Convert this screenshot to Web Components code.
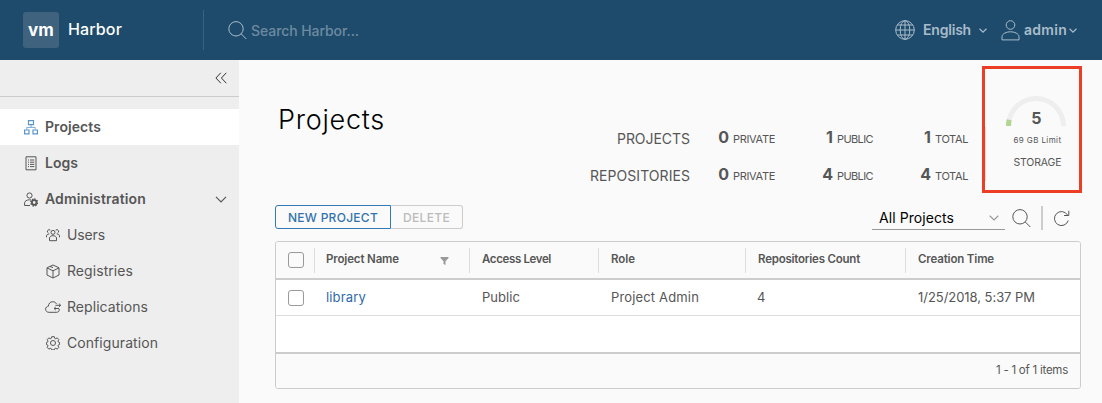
<!DOCTYPE html>
<html lang="en">
<head>
<meta charset="utf-8">
<title>Harbor</title>
<style>
html,body{margin:0;padding:0}
body{font-family:Inter,"Open Sans","Liberation Sans",sans-serif;font-size:14px;line-height:20px;color:#565656;background:#fafafa}
</style>
</head>
<body>
<hb-app></hb-app>
<script>
const define = (name, html, setup) => {
  const tpl = document.createElement('template');
  tpl.innerHTML = html;
  customElements.define(name, class extends HTMLElement {
    constructor() {
      super();
      this.attachShadow({ mode: 'open' }).append(document.importNode(tpl.content, true));
    }
    connectedCallback() { if (setup) setup(this, this.shadowRoot); }
  });
};

const icons = {
  search: ['0 0 19 19', '<circle cx="8" cy="7.8" r="7.2"/><path d="M13.3 13l5 5"/>'],
  globe: ['0 0 20 20', '<circle cx="10" cy="10" r="9.3"/><ellipse cx="10" cy="10" rx="4.8" ry="9.3"/><path d="M10 .7v18.6M.7 10h18.6M2.4 5h15.2M2.4 15h15.2"/>'],
  user: ['0 0 19 21', '<circle cx="9.5" cy="5" r="4.3"/><path d="M1 19.9v-3.2c0-3 4.5-4.9 8.500-4.900s8.500 1.900 8.500 4.900v3.200z"/>'],
  down: ['0 0 10 6', '<path vector-effect="non-scaling-stroke" stroke-width="1.200" d="M.7.8L5 5 9.300.8"/>'],
  collapse: ['0 0 12 12', '<path d="M5.800.8L.9 6l4.900 5.200M11.300.8L6.400 6l4.900 5.200"/>'],
  tree: ['0 0 14 15', '<path stroke-width="1.200" d="M4.500.6h5v4h-5zM.6 10h4.400v3.900H.6zM9 10h4.400v3.900H9z"/><path stroke-width=".8" d="M7 4.800v2.600M2.800 9.500V7.400h8.400v2.100"/>'],
  log: ['0 0 12 15', '<path d="M1 .8h10v13H1z"/><path d="M3 4h1M5 4h4.300M3 6.200h1M5 6.200h4.300M3 8.400h1M5 8.400h4.300M3 10.600h1M5 10.600h4.300"/>'],
  admin: ['0 0 14 15', '<circle cx="5.500" cy="3.500" r="2.600"/><path d="M6 13.500H.6v-2.700c0-1.700 2.400-3 4.900-3l1.700.2"/><circle cx="10.200" cy="10.500" r="2.300" stroke-width="1.800"/><path stroke-width="1.500" stroke-dasharray="1.400 1.270" d="M10.200 7.100a3.400 3.400 0 110 6.800 3.400 3.400 0 010-6.800"/>'],
  users: ['0 0 14 14', '<circle cx="7" cy="4.400" r="2"/><path d="M3.500 12.700V10c0-1.300 1.600-2.300 3.500-2.300s3.500 1 3.500 2.300v2.700zM4.300 2.200A1.700 1.700 0 102.500 5M9.700 2.200A1.700 1.700 0 1111.500 5M.5 9.300V8c0-1.200 1.100-2 2.800-2M13.500 9.300V8c0-1.200-1.100-2-2.800-2"/>'],
  box: ['0 0 14 15', '<path d="M7 1l6 2.800v7.200L7 14l-6-3V3.800zM1 3.900l6 2.900 6-2.900M7 6.800V14M4 2.400l3 1.300"/>'],
  cloud: ['0 0 17 12', '<path d="M14.300 8c.3 1.900-.8 3.300-2.600 3.300H3.900C2 11.300.6 10 .6 8.200c0-1.700 1.200-2.900 2.800-3C3.500 2.600 5.200.7 7.700.7c1.700 0 3 .8 3.800 2.200M10.500 4.300h5M13.900 2.600l1.800 1.700-1.800 1.700M14 7.500H9.300M10.800 5.900L9.100 7.500l1.700 1.700"/>'],
  gear: ['0 0 14 14', '<circle cx="7" cy="7" r="2.500"/><path d="M5.700.7h2.600l.4 1.600 1 .4 1.500-.8 1.600 1.700-.8 1.500.4 1 1.200.4v2l-1.200.4-.4 1 .8 1.500-1.600 1.700-1.500-.8-1 .4-.4 1.200H5.700l-.4-1.200-1-.4-1.500.8-1.600-1.700.8-1.500-.4-1L.4 8.500v-2l1.200-.4.4-1-.8-1.500 1.600-1.700 1.500.8 1-.4z"/>'],
  filter: ['0 0 8 8', '<path fill="currentColor" stroke="none" d="M0 0h8v1L5 4.200V8L3 7V4.200L0 1z"/>'],
  refresh: ['0 0 16 17', '<path d="M14.200 10.500A7 7 0 1113.500 5M14.800.8v4.700H10"/>'],
};

/* dashboard page */
define('hb-app', `<style>
  :host{display:grid;grid-template:60px 343px/239px 1fr;width:1102px;height:403px;overflow:hidden}
  hb-header{grid-column:1/3}
</style>
<hb-header></hb-header><hb-sidebar></hb-sidebar><hb-main></hb-main>`);

define('hb-header', `<style>
  :host{display:flex;align-items:center;background:#1e4b6b;color:#a9bccb;box-sizing:border-box;padding-left:23px}
  .logo{width:36px;height:36px;border-radius:3px;background:#3f627f;color:#fff;display:flex;align-items:center;justify-content:center;font:700 17px/30px Inter,sans-serif}
  .name{color:#fff;font-size:16px;font-weight:500;margin-left:9px;width:135px;margin-top:-2px}
  .sep{width:1px;height:40px;background:#3b617d}
  .q{margin:0 4px 0 24px}
  .ph{color:#6d8aa1;padding-top:2px;width:644px;font-weight:500}
  .b{font-weight:600}
</style>
<div class="logo"><hb-text w="26">vm</hb-text></div><div class="name"><hb-text w="54">Harbor</hb-text></div>
<div class="sep"></div><hb-icon class="q" name="search" w="19" h="19"></hb-icon>
<div class="ph"><hb-text w="108">Search Harbor...</hb-text></div>
<hb-icon name="globe" w="20" h="20" style="margin-right:8px"></hb-icon><hb-text class="b" w="48">English</hb-text>
<hb-icon name="down" w="8" h="5" style="margin:0 14px 0 8px"></hb-icon>
<hb-icon name="user" w="19" h="21" style="margin-right:4px"></hb-icon><hb-text class="b" w="43">admin</hb-text>
<hb-icon name="down" w="8" h="5" style="margin-left:2px"></hb-icon>`);

define('hb-sidebar', `<style>
  :host{display:block;background:#eee}
  .top{height:36px;border-bottom:1px solid #ccc;display:flex;align-items:center;justify-content:flex-end;padding-right:12px;margin-bottom:12px;color:#333}
</style>
<div class="top"><hb-icon name="collapse" w="12" h="12"></hb-icon></div>
<hb-nav icon="tree" iw="14" ih="15" active><hb-text w="56">Projects</hb-text></hb-nav>
<hb-nav icon="log" iw="12" ih="15"><hb-text w="33">Logs</hb-text></hb-nav>
<hb-nav icon="admin" iw="14" ih="15"><hb-text w="101">Administration</hb-text><hb-icon slot="end" name="down" w="12" h="7"></hb-icon></hb-nav>
<hb-nav icon="users" iw="14" ih="14" sub><hb-text w="38">Users</hb-text></hb-nav>
<hb-nav icon="box" iw="14" ih="15" sub><hb-text w="66">Registries</hb-text></hb-nav>
<hb-nav icon="cloud" iw="17" ih="12" sub><hb-text w="81">Replications</hb-text></hb-nav>
<hb-nav icon="gear" iw="14" ih="14" sub><hb-text w="91">Configuration</hb-text></hb-nav>`);

define('hb-nav', `<style>
  :host{display:flex;align-items:center;height:36px;font-weight:600;padding:0 12px 0 22px}
  :host([sub]){font-weight:400;padding-left:44px}
  :host([active]){background:#fff}
  .ic{width:18px;display:flex;justify-content:center;margin-right:5px}
  :host([active]) .ic{color:#5b96c8}
  .tx{flex:1}
</style><span class="ic"></span><span class="tx"><slot></slot></span><slot name="end"></slot>`,
(el, root) => {
  const i = document.createElement('hb-icon');
  i.setAttribute('name', el.getAttribute('icon'));
  i.setAttribute('w', el.getAttribute('iw'));
  i.setAttribute('h', el.getAttribute('ih'));
  root.querySelector('.ic').replaceChildren(i);
});

define('hb-main', `<style>
  :host{display:block;padding:6px 20px 0 36px}
  .head{display:flex;height:127px}
  h1{margin:38px 0 0 3px;font-size:27px;line-height:32px;font-weight:300;color:#000;width:310px}
  .bar{display:flex;align-items:center;height:28px;margin-top:10px}
  .btns{display:flex;font-size:12px;font-weight:500}
  .btn{height:22px;line-height:23px;border:1px solid #ccc;padding:0 12px;color:#bbb;border-radius:0 3px 3px 0;border-left:0}
  .new{border:1px solid #3279b5;color:#3272ad;border-radius:3px 0 0 3px}
  .sel{margin-left:auto;width:133px;height:24px;box-sizing:border-box;border-bottom:1px solid #999;display:flex;align-items:center;justify-content:space-between;padding:1px 6px 0 7px;color:#000;margin-top:1px}
  .sel hb-icon{color:#999}
  .v{width:2px;height:24px;background:#ccc;margin:2px 11px 0 10px}
  hb-table{margin-top:10px}
</style>
<div class="head"><h1><hb-text w="107">Projects</hb-text></h1><hb-stats></hb-stats><hb-storage></hb-storage></div>
<div class="bar"><div class="btns"><div class="btn new"><hb-text w="90">NEW PROJECT</hb-text></div><div class="btn"><hb-text w="47">DELETE</hb-text></div></div>
<div class="sel"><hb-text w="75">All Projects</hb-text><hb-icon name="down" w="10" h="6"></hb-icon></div>
<hb-icon name="search" w="19" h="19" style="margin:2px 0 0 7px"></hb-icon><div class="v"></div><hb-icon name="refresh" w="16" h="17" style="margin:2px 12px 0 0"></hb-icon></div>
<hb-table></hb-table>`);

define('hb-stats', `<style>
  :host{display:block;width:379px;padding-top:61px}
  .r{display:grid;grid-template-columns:102px 43px 46px 58px 40px 58px 32px;height:37px;align-items:baseline;line-height:20px}
  .l{text-align:right}
  .l hb-text{position:relative;top:1px}
  b{font-size:16px;text-align:right;padding-right:4px;font-weight:700}
  small{font-size:11px}
</style>
<div class="r"><span class="l"><hb-text w="73">PROJECTS</hb-text></span><b>0</b><small><hb-text w="42">PRIVATE</hb-text></small><b>1</b><small><hb-text w="36">PUBLIC</hb-text></small><b>1</b><small><hb-text w="33">TOTAL</hb-text></small></div>
<div class="r"><span class="l"><hb-text w="100">REPOSITORIES</hb-text></span><b>0</b><small><hb-text w="42">PRIVATE</hb-text></small><b>4</b><small><hb-text w="36">PUBLIC</hb-text></small><b>4</b><small><hb-text w="33">TOTAL</hb-text></small></div>`);

define('hb-storage', `<style>
  :host{display:flex;margin-left:15px;width:100px;height:127px;box-sizing:border-box;border:3px solid #eb3e25;flex:none}
  .line{width:1px;height:54px;background:#ddd;margin-top:58px}
  .g{width:102px;display:flex;flex-direction:column;align-items:center;padding:27px 0 0 8px}
  .arc{display:grid;height:30px;width:60px}
  .arc>*{grid-area:1/1}
  b{font-size:16px;font-weight:700;line-height:20px;text-align:center;margin-top:12px}
  .lim{font-size:8px;line-height:10px;margin-top:9px;padding-left:2px}
  .st{font-size:10.500px;line-height:14px;margin-top:11px;padding-left:2px}
</style>
<div class="line"></div><div class="g"><div class="arc"><svg width="60" height="30" fill="none" stroke-width="5"><path stroke="#eee" d="M2.500 30a27.500 27.500 0 0155 0"/><path stroke="#b3d592" d="M2.500 30a27.500 27.500 0 01.7-6.200"/></svg><b>5</b></div>
<div class="lim"><hb-text w="48">69 GB Limit</hb-text></div><div class="st"><hb-text w="48">STORAGE</hb-text></div></div>`);

define('hb-table', `<style>
  :host{display:block;box-sizing:border-box;width:806px;height:148px;border:1px solid #ccc;border-radius:3px;background:#fff;overflow:hidden}
  .r{display:grid;grid-template-columns:38px 155px 129px 147px 160px 1fr;align-items:center}
  .h{background:#fafafa;height:36px;border-bottom:2px solid #ccc;font-size:11.500px;font-weight:600}
  .h>div+div{border-left:1px solid #ddd;height:25px;line-height:22px;display:flex;box-sizing:border-box}
  .r>div+div{padding-left:12px}
  .d>div+div{padding:0 0 1px 13px}
  .r>div:nth-child(2){padding-left:11px}
  .d>div:nth-child(2),.d>div:nth-child(5){padding-left:12px}
  .d{height:35px;border-bottom:1px solid #ddd;font-size:13px}
  .c{width:14px;height:14px;border:1px solid #999;border-radius:3px;margin-left:12px;background:#fff}
  .h .c{background:#fafafa}
  .e{height:36px;border-bottom:2px solid #ccc}
  .f{height:34px;line-height:32px;background:#fafafa;text-align:right;padding-right:12px;font-size:11.500px}
  .fl{margin:9px 0 0 41px;color:#999}
  .lk{color:#3068a8}
</style>
<div class="r h"><div class="c"></div><div><hb-text w="73">Project Name</hb-text><hb-icon class="fl" name="filter" w="9" h="8"></hb-icon></div><div><hb-text w="69">Access Level</hb-text></div><div><hb-text w="24">Role</hb-text></div><div><hb-text w="102">Repositories Count</hb-text></div><div><hb-text w="76">Creation Time</hb-text></div></div>
<div class="r d"><div class="c"></div><div class="lk"><hb-text w="40">library</hb-text></div><div><hb-text w="38">Public</hb-text></div><div><hb-text w="88">Project Admin</hb-text></div><div>4</div><div><hb-text w="117">1/25/2018, 5:37 PM</hb-text></div></div>
<div class="e"></div><div class="f"><hb-text w="72">1 - 1 of 1 items</hb-text></div>`);

define('hb-icon', `<style>:host{display:block;flex:none}svg{display:block}</style><svg fill="none" stroke="currentColor"></svg>`, (el, root) => {
  const [box, body] = icons[el.getAttribute('name')];
  const svg = root.querySelector('svg');
  svg.setAttribute('viewBox', box);
  svg.setAttribute('width', el.getAttribute('w'));
  svg.setAttribute('height', el.getAttribute('h'));
  svg.innerHTML = body;
});

/* one line of text, tracked out or in to the width it is given */
define('hb-text', `<style>:host{display:inline-block;white-space:nowrap}</style><slot></slot>`, el => {
  const w = +el.getAttribute('w');
  const r = document.createRange();
  r.selectNodeContents(el);
  const natural = r.getBoundingClientRect().width;
  el.style.letterSpacing = ((w - natural) / el.textContent.length).toFixed(3) + 'px';
});
</script>
</body>
</html>
